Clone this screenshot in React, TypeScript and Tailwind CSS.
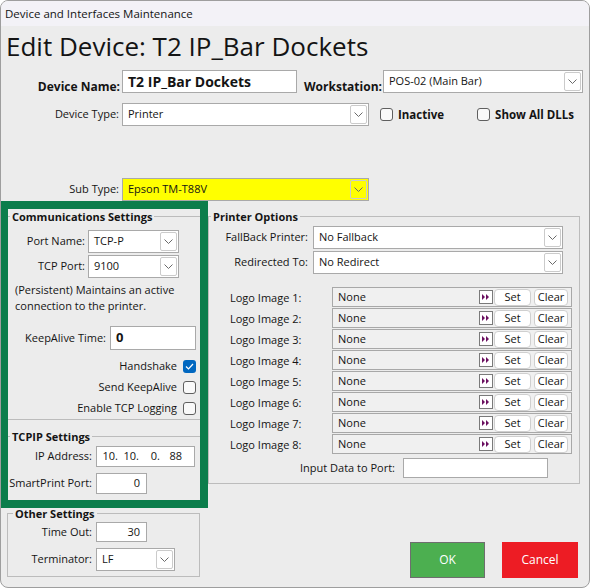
import React from 'react';

function Chevron() {
  return (
    <svg width="9" height="5" viewBox="0 0 9 5">
      <path d="M0.5 0.5 L4.5 4.5 L8.5 0.5" fill="none" stroke="#6a6a6a" strokeWidth="1" />
    </svg>
  );
}

function Select({ className, text }: { className: string; text: string }) {
  return (
    <div className={`flex items-center border border-[#a9a9a9] ${className}`}>
      <span className="flex-1 truncate pl-[5px]">{text}</span>
      <span className="mr-[1px] flex h-[19px] w-[17px] items-center justify-center rounded-[2px] border border-[#cbcbcb]">
        <Chevron />
      </span>
    </div>
  );
}

function Check({ checked }: { checked?: boolean }) {
  if (checked) {
    return (
      <span className="flex h-[13px] w-[13px] items-center justify-center rounded-[3px] bg-[#0067c0]">
        <svg width="9" height="7" viewBox="0 0 9 7">
          <path d="M1 3.5 L3.5 6 L8 1" fill="none" stroke="white" strokeWidth="1.2" />
        </svg>
      </span>
    );
  }
  return <span className="block h-[13px] w-[13px] rounded-[3px] border border-[#5f5f5f] bg-[#f9f9f9]" />;
}

function CheckRow({ label, checked }: { label: string; checked?: boolean }) {
  return (
    <div className="flex h-[21px] items-center justify-end gap-[6px] pr-[4px]">
      <span>{label}</span>
      <Check checked={checked} />
    </div>
  );
}

function LogoRow({ n }: { n: number }) {
  return (
    <div className="mt-[1px] flex h-[20px] items-center">
      <span className="w-[123px] pl-[21px] pt-[2px]">Logo Image {n}:</span>
      <div className="flex h-[20px] w-[240px] items-center border border-[#a8a8a8] bg-[#f0f0f0] pr-[3px]">
        <span className="pl-[5px]">None</span>
        <span className="ml-auto flex h-[14px] w-[14px] items-center justify-center border border-[#7a7a7a] bg-white">
          <svg width="8" height="6" viewBox="0 0 8 6">
            <polygon points="0,0 3,3 0,6" fill="#6b1060" />
            <polygon points="4,0 7,3 4,6" fill="#6b1060" />
          </svg>
        </span>
        <span className="ml-[1px] flex h-[17px] w-[37px] items-center justify-center rounded-[4px] border border-[#cfcfcf] bg-white">
          Set
        </span>
        <span className="ml-[3px] flex h-[17px] w-[34px] items-center justify-center rounded-[4px] border border-[#cfcfcf] bg-white">
          Clear
        </span>
      </div>
    </div>
  );
}

function Legend({ children, className = 'ml-[2px]' }: { children: React.ReactNode; className?: string }) {
  return <legend className={`${className} px-[2px] text-[11px] leading-[15px] font-bold`}>{children}</legend>;
}

export default function App() {
  return (
    <div className="h-[588px] w-[590px] bg-white font-['Open_Sans',sans-serif] text-[11px] text-[#141414]">
      <div className="flex h-full flex-col overflow-hidden rounded-[8px] border border-[#9e9e9e] bg-[#ececec]">
        <div className="h-[25px] bg-[#f3f2f7] pl-[4px] text-[11.5px] leading-[25px]">
          Device and Interfaces Maintenance
        </div>

        <div className="flex-1">
          <h1 className="h-[38px] pl-[5px] text-[26px] leading-[40px]">Edit Device: T2 IP_Bar Dockets</h1>

          {/* name / workstation */}
          <div className="mt-[6px] flex h-[23px] items-end">
            <span className="w-[119px] text-right text-[12px] leading-[12px] font-bold">Device Name:</span>
            <div className="ml-[2px] flex h-[23px] w-[175px] items-center border border-[#a9a9a9] bg-white pl-[5px] text-[14px] font-bold">
              T2 IP_Bar Dockets
            </div>
            <span className="ml-[7px] text-[12px] leading-[12px] font-bold">Workstation:</span>
            <Select className="ml-[1px] h-[23px] w-[200px] bg-white" text="POS-02 (Main Bar)" />
          </div>

          {/* device type */}
          <div className="mt-[10px] flex h-[23px] items-center">
            <span className="w-[118px] text-right">Device Type:</span>
            <Select className="ml-[3px] h-[23px] w-[247px] bg-white" text="Printer" />
            <span className="ml-[11px]">
              <Check />
            </span>
            <span className="ml-[5px] text-[11.5px] font-bold">Inactive</span>
            <span className="ml-[33px]">
              <Check />
            </span>
            <span className="ml-[5px] text-[11.5px] font-bold">Show All DLLs</span>
          </div>

          {/* sub type */}
          <div className="mt-[52px] flex h-[23px] items-center">
            <span className="w-[118px] text-right">Sub Type:</span>
            <Select className="ml-[3px] h-[23px] w-[247px] bg-[#ffff00]" text="Epson TM-T88V" />
          </div>

          <div className="flex">
            {/* left column */}
            <div className="-ml-[1px] w-[208px]">
              <div className="h-[307px] border-[8px] border-[#0b7d4b]">
                <fieldset className="border-t border-b border-[#bcbcbc]">
                  <Legend>Communications Settings</Legend>
                  <div className="mt-[6px] flex h-[23px] items-center">
                    <span className="w-[77px] text-right">Port Name:</span>
                    <Select className="ml-[3px] h-[23px] w-[91px] bg-white" text="TCP-P" />
                  </div>
                  <div className="mt-[2px] flex h-[23px] items-center">
                    <span className="w-[77px] text-right">TCP Port:</span>
                    <Select className="ml-[3px] h-[23px] w-[91px] bg-white" text="9100" />
                  </div>
                  <p className="mt-[4px] pl-[7px] leading-[16px]">
                    (Persistent) Maintains an active
                    <br />
                    connection to the printer.
                  </p>
                  <div className="mt-[12px] flex h-[24px] items-center">
                    <span className="w-[98px] text-right">KeepAlive Time:</span>
                    <div className="ml-[4px] flex h-[24px] w-[86px] items-center border border-[#a9a9a9] bg-white pl-[5px] text-[13px] font-bold">
                      0
                    </div>
                  </div>
                  <div className="mt-[6px]">
                    <CheckRow label="Handshake" checked />
                    <CheckRow label="Send KeepAlive" />
                    <CheckRow label="Enable TCP Logging" />
                  </div>
                </fieldset>

                <fieldset className="mt-[9px] border-t border-[#bcbcbc]">
                  <Legend>TCPIP Settings</Legend>
                  <div className="mt-[2px] flex h-[21px] items-center">
                    <span className="w-[84px] text-right">IP Address:</span>
                    <div className="ml-[4px] flex h-[21px] w-[99px] items-center border border-[#a9a9a9] bg-white">
                      <span className="w-[21px] text-right">10.</span>
                      <span className="w-[21px] text-right">10.</span>
                      <span className="w-[21px] text-right">0.</span>
                      <span className="w-[22px] text-right">88</span>
                    </div>
                  </div>
                  <div className="mt-[6px] flex h-[21px] items-center">
                    <span className="w-[84px] text-right">SmartPrint Port:</span>
                    <div className="ml-[4px] flex h-[21px] w-[51px] items-center justify-end border border-[#a9a9a9] bg-white pr-[6px]">
                      0
                    </div>
                  </div>
                </fieldset>
              </div>

              <fieldset className="-mt-[2px] ml-[7px] w-[193px] border border-[#bcbcbc] pb-[5px]">
                <Legend className="ml-[5px]">Other Settings</Legend>
                <div className="mt-[1px] flex h-[20px] items-center">
                  <span className="w-[84px] text-right">Time Out:</span>
                  <div className="ml-[4px] flex h-[20px] w-[51px] items-center justify-end border border-[#a9a9a9] bg-white pr-[6px]">
                    30
                  </div>
                </div>
                <div className="mt-[6px] flex h-[23px] items-center">
                  <span className="w-[84px] text-right">Terminator:</span>
                  <Select className="ml-[4px] h-[23px] w-[79px] bg-white" text="LF" />
                </div>
              </fieldset>
            </div>

            {/* right column */}
            <div className="flex-1">
              <fieldset className="mt-[8px] w-[372px] border border-[#bcbcbc] pb-[5px]">
                <Legend>Printer Options</Legend>
                <div className="mt-[2px] flex h-[23px] items-center">
                  <span className="w-[99px] text-right">FallBack Printer:</span>
                  <Select className="ml-[5px] h-[23px] w-[250px] bg-white" text="No Fallback" />
                </div>
                <div className="mt-[2px] flex h-[23px] items-center">
                  <span className="w-[99px] text-right">Redirected To:</span>
                  <Select className="ml-[5px] h-[23px] w-[250px] bg-white" text="No Redirect" />
                </div>
                <div className="mt-[13px]">
                  {[1, 2, 3, 4, 5, 6, 7, 8].map((n) => (
                    <LogoRow key={n} n={n} />
                  ))}
                </div>
                <div className="mt-[4px] flex h-[20px] items-center">
                  <span className="w-[186px] text-right">Input Data to Port:</span>
                  <div className="ml-[8px] h-[20px] w-[145px] border border-[#a9a9a9] bg-white" />
                </div>
              </fieldset>

              <div className="mt-[58px] flex">
                <button className="ml-[202px] h-[36px] w-[75px] border border-[#6e6e6e] bg-[#4caf50] text-[12px] text-white">
                  OK
                </button>
                <button className="ml-[17px] h-[36px] w-[76px] bg-[#ed1c24] text-[12px] text-white">Cancel</button>
              </div>
            </div>
          </div>
        </div>
      </div>
    </div>
  );
}
